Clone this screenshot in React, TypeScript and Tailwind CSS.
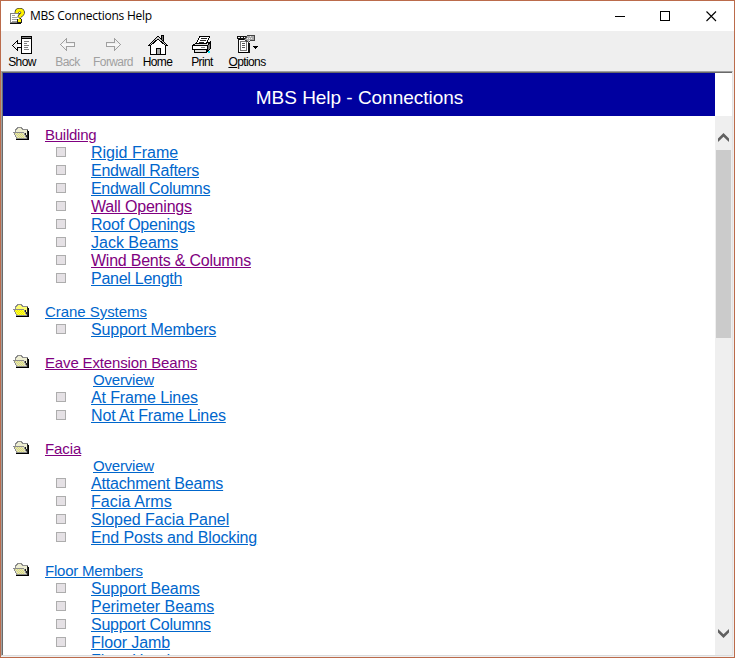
import React from "react";

type Item = { label: string; tracking?: string; visited?: boolean; overview?: boolean };
type Group = { title: string; tracking: string; visited?: boolean; items: Item[] };

const groups: Group[] = [
  {
    title: "Building",
    tracking: "tracking-[-0.25px]",
    visited: true,
    items: [
      { label: "Rigid Frame" },
      { label: "Endwall Rafters", tracking: "tracking-[-0.27px]" },
      { label: "Endwall Columns", tracking: "tracking-[-0.3px]" },
      { label: "Wall Openings", tracking: "tracking-[-0.2px]", visited: true },
      { label: "Roof Openings", tracking: "tracking-[-0.22px]" },
      { label: "Jack Beams" },
      { label: "Wind Bents & Columns", tracking: "tracking-[-0.23px]", visited: true },
      { label: "Panel Length", tracking: "tracking-[-0.27px]" },
    ],
  },
  {
    title: "Crane Systems",
    tracking: "tracking-[-0.05px]",
    items: [{ label: "Support Members", tracking: "tracking-[-0.13px]" }],
  },
  {
    title: "Eave Extension Beams",
    tracking: "tracking-[-0.15px]",
    visited: true,
    items: [
      { label: "Overview", overview: true, tracking: "tracking-[-0.2px]" },
      { label: "At Frame Lines", tracking: "tracking-[-0.12px]" },
      { label: "Not At Frame Lines", tracking: "tracking-[-0.12px]" },
    ],
  },
  {
    title: "Facia",
    tracking: "tracking-[-0.1px]",
    visited: true,
    items: [
      { label: "Overview", overview: true, tracking: "tracking-[-0.2px]" },
      { label: "Attachment Beams", tracking: "tracking-[-0.19px]" },
      { label: "Facia Arms", tracking: "tracking-[0.08px]" },
      { label: "Sloped Facia Panel", tracking: "tracking-[-0.03px]" },
      { label: "End Posts and Blocking", tracking: "tracking-[-0.13px]" },
    ],
  },
  {
    title: "Floor Members",
    tracking: "tracking-[-0.23px]",
    items: [
      { label: "Support Beams", tracking: "tracking-[-0.12px]" },
      { label: "Perimeter Beams", tracking: "tracking-[-0.03px]" },
      { label: "Support Columns", tracking: "tracking-[-0.25px]" },
      { label: "Floor Jamb", tracking: "tracking-[-0.1px]" },
      { label: "Floor Header" },
    ],
  },
];

function HelpIcon() {
  return (
    <svg width="16" height="17" viewBox="0 0 16 17" shapeRendering="crispEdges">
      <path d="M1.5 5.5h9v9h-9z" fill="#fff" stroke="#808080" />
      <path d="M1 15.500h11M11.500 10v6" stroke="#111" fill="none" />
      <path d="M3 7.500h3M3 9.500h5M3 11.500h5M3 13.500h5" stroke="#a0a0a0" />
      <g shapeRendering="auto" fill="none" strokeLinejoin="round">
        <path d="M7.700 5C7.700 2.500 8.800 2 10.900 2c2.900 0 3.600 3 1.700 4.500-1.200.9-2.100 1.300-2.100 3" stroke="#222" strokeWidth="4.200" />
        <path d="M7.700 5C7.700 2.500 8.800 2 10.900 2c2.900 0 3.600 3 1.700 4.500-1.200.9-2.100 1.300-2.100 3" stroke="#fff200" strokeWidth="2.900" />
      </g>
      <path d="M8 11h5v4H8z" fill="#222" />
      <path d="M9 11h3v3H9z" fill="#fff200" />
    </svg>
  );
}

function ShowIcon() {
  return (
    <svg width="20" height="18" viewBox="0 0 20 18" shapeRendering="crispEdges" className="mr-px">
      <path d="M9.500.5h10v17h-10z" fill="#fff" stroke="#000" />
      <path d="M10 1.500h9" stroke="#808080" />
      <path d="M9 2.500h11" stroke="#000" />
      <path d="M12 5.500h5M12 7.500h3M12 9.500h5M12 11.500h4M12 13.500h5" stroke="#808080" />
      <path d="M9 7h-3v5h3z" fill="#fff" />
      <path d="M9 7h-3v1h3zM9 11h-3v1h3zM5 4h1v4H5zM5 11h1v4H5zM4 5h1v1H4zM3 6h1v1H3zM2 7h1v1H2zM1 8h1v1H1zM0 9h1v1H0zM1 10h1v1H1zM2 11h1v1H2zM3 12h1v1H3zM4 13h1v1H4z" fill="#000" />
    </svg>
  );
}

function ArrowIcon({ right }: { right?: boolean }) {
  return (
    <svg width="15" height="13" viewBox="0 0 15 13" shapeRendering="crispEdges" className={right ? "-scale-x-100" : ""}>
      <path d="M2 6h12v2H2z" fill="#f8f8f8" />
      <path d="M6 4h9v1H6zM6 8h9v1H6zM14 4h1v5h-1zM6 0h1v5H6zM6 8h1v5H6zM5 1h1v1H5zM4 2h1v1H4zM3 3h1v1H3zM2 4h1v1H2zM1 5h1v1H1zM0 6h1v1H0zM1 7h1v1H1zM2 8h1v1H2zM3 9h1v1H3zM4 10h1v1H4zM5 11h1v1H5z" fill="#a0a0a0" />
    </svg>
  );
}

function HomeIcon() {
  return (
    <svg width="20" height="20" viewBox="0 0 20 20" shapeRendering="crispEdges">
      <path d="M13.500 5V.5h2V7" fill="#777" stroke="#000" />
      <path d="M2.500 10v9.500h15V10L10 3z" fill="#fff" stroke="#000" />
      <path d="M.5 10.500L9.500 1.500h1l9 9h-2L10 4l-7.500 6.500z" fill="#c8c8c8" stroke="#000" />
      <path d="M8 13h5v7H8z" fill="#000" />
      <path d="M9 14h3v5H9z" fill="#a8a8a8" />
    </svg>
  );
}

function PrintIcon() {
  return (
    <svg width="20" height="19" viewBox="0 0 20 19" shapeRendering="crispEdges">
      <path d="M.5 10.500l5-3h13l-3 3z" fill="#ddd" stroke="#000" />
      <path d="M4.500 8.500l3-7h10l-3 7z" fill="#fff" stroke="#000" />
      <path d="M9 3.500h6M8 5.500h6M7 7.500h5" stroke="#222" />
      <path d="M15.500 10.500l3-4v7l-3 3z" fill="#777" stroke="#000" />
      <path d="M.5 10.500h15v4H.5z" fill="#fff" stroke="#000" />
      <path d="M2.500 14.500h12v3h-12z" fill="#ddd" stroke="#000" />
      <path d="M9 12h4v1H9z" fill="#888" />
      <path d="M16 16h2v2h-2z" fill="#00eaff" />
    </svg>
  );
}

function OptionsIcon() {
  return (
    <svg width="21" height="19" viewBox="0 0 21 19" shapeRendering="crispEdges">
      <path d="M1.500 4.500h10v13h-10z" fill="#fff" stroke="#000" />
      <path d="M0 1h10v1H0zM0 3h12v1H0zM0 1h1v3H0zM3 1h1v3H3zM6 1h1v3H6zM11 8h2v10h-2zM1 4h1v14H1z" fill="#111" />
      <path d="M3.500 6.500h6v9h-6z" fill="#fff" stroke="#777" />
      <path d="M5 8.500h3M5 10.500h3M5 12.500h3" stroke="#555" />
      <path d="M7.500 4.500l3-4h7v5h-4l-2 2z" fill="#aaa" stroke="#444" />
      <path d="M10 3h1v1h-1zM12 3h1v1h-1zM14 3h1v1h-1zM12 5h1v1h-1zM13 1h1v1h-1z" fill="#eee" />
      <path d="M16 11h5v1h-1v1h-1v1h-1v-1h-1v-1h-1z" fill="#000" />
    </svg>
  );
}

function Folder({ bright }: { bright: boolean }) {
  return (
    <svg width="16" height="13" viewBox="0 0 16 13" shapeRendering="crispEdges" className="mt-px ml-[10px] shrink-0 self-start">
      <path d="M15 4h1v9H3v-1h12z" fill="#000" />
      <path d="M2.500 10V2.500h1v-1h1v-1h4v1h1v1h4.500v8z" fill={bright ? "#ffff70" : "#eeeed2"} stroke="#8c8c8c" />
      <path d="M.5 5.500h10l1 1v1l1 1v1l1 1v1H3.500v-1l-1-1v-1l-1-1v-1z" fill={bright ? "#ffff30" : "#e2e2c0"} stroke="#8c8c8c" />
      <path
        d="M2 6h1v1H2zM4 6h1v1H4zM6 6h1v1H6zM8 6h1v1H8zM3 7h1v1H3zM5 7h1v1H5zM7 7h1v1H7zM9 7h1v1H9zM4 8h1v1H4zM6 8h1v1H6zM8 8h1v1H8zM10 8h1v1h-1zM5 9h1v1H5zM7 9h1v1H7zM9 9h1v1H9zM4 10h1v1H4zM6 10h1v1H6zM8 10h1v1H8zM10 10h1v1h-1z"
        fill={bright ? "#f0ec00" : "#dede78"}
      />
      <path d="M12 6h1v2h-1zM13 8h1v2h-1zM14 3h1v9h-1z" fill="#222" />
    </svg>
  );
}

type ToolProps = { label: React.ReactNode; width: string; disabled?: boolean; children: React.ReactNode };

function Tool({ label, width, disabled, children }: ToolProps) {
  return (
    <div className={`flex shrink-0 flex-col items-center ${width}`}>
      <div className="flex h-[23px] items-center justify-center pt-[2px]">{children}</div>
      <div className={`whitespace-nowrap text-[12px] leading-[14px] tracking-[-0.6px] ${disabled ? "text-[#a0a0a0]" : "text-black"}`}>
        {label}
      </div>
    </div>
  );
}

function Chevron({ down }: { down?: boolean }) {
  return (
    <svg width="11" height="9" viewBox="0 0 11 9" className={down ? "rotate-180" : ""}>
      <path d="M0 5.500L5.500 0 11 5.500V9L5.500 3.800 0 9z" fill="#606060" />
    </svg>
  );
}

export default function App() {
  return (
    <div className="flex h-[658px] w-[735px] flex-col overflow-hidden border border-[#bb6b4b] bg-[#efefef] font-['Liberation_Sans',Arial,sans-serif]">
      <header className="flex h-[30px] shrink-0 items-center bg-white pl-2">
        <HelpIcon />
        <span className="ml-[5px] w-[140px] whitespace-nowrap font-['Open_Sans','Noto_Sans',sans-serif] text-[12px] leading-[16px] tracking-[-0.25px] text-black">
          MBS Connections Help
        </span>
        <div className="ml-auto flex items-center pr-[17px]">
          <svg width="102" height="12" viewBox="0 0 102 12" fill="none" stroke="#000">
            <path d="M0 6.500h10M45.500 1.500h9v9h-9z" shapeRendering="crispEdges" />
            <path d="M91.500 1.500l9.500 9.500M101 1.500l-9.500 9.500" strokeWidth="1.100" />
          </svg>
        </div>
      </header>

      <nav className="flex h-[40px] shrink-0 pt-[1px]">
        <Tool label="Show" width="w-[42px]"><ShowIcon /></Tool>
        <Tool label="Back" width="w-[49px]" disabled><ArrowIcon /></Tool>
        <Tool label="Forward" width="w-[42px]" disabled><ArrowIcon right /></Tool>
        <Tool label="Home" width="w-[47px]"><HomeIcon /></Tool>
        <Tool label="Print" width="w-[42px]"><PrintIcon /></Tool>
        <Tool label={<><span className="underline">O</span>ptions</>} width="w-[48px]"><OptionsIcon /></Tool>
      </nav>

      <div className="mr-px mb-px flex min-h-0 grow flex-col border border-t-[#a0a0a0] border-r-[#e3e3e3] border-b-[#dcdcdc] border-l-[#a0a0a0]">
        <div className="flex min-h-0 grow flex-col border-t border-l border-[#696969] bg-white">
          <div className="flex h-[43px] shrink-0">
            <div className="flex w-[712px] items-center justify-center bg-[#0000a0] pt-[7px] pl-px text-[19px] leading-[22px] tracking-[-0.03px] text-white">
              MBS Help - Connections
            </div>
          </div>
          <div className="flex min-h-0 grow">
            <main className="w-[712px] overflow-hidden pt-[10px]">
              {groups.map((group) => (
                <section key={group.title} className="mb-[15px]">
                  <div className="flex h-[18px] items-start">
                    <Folder bright={group.title === "Crane Systems"} />
                    <a className={`ml-4 whitespace-nowrap text-[15px] leading-[17px] underline ${group.tracking} ${group.visited ? "text-[#800080]" : "text-[#0066cc]"}`}>
                      {group.title}
                    </a>
                  </div>
                  {group.items.map((item) => (
                    <div key={item.label} className={`flex ${item.overview ? "-mt-px h-[18px] pl-[90px]" : "h-[18px] pl-[53px]"}`}>
                      {!item.overview && <span className="mt-[3px] mr-[25px] size-[10px] shrink-0 border border-[#adadad] bg-[#e5e1e5]" />}
                      <a className={`whitespace-nowrap underline ${item.overview ? "text-[15px] leading-[17px]" : "text-[16px] leading-[18px]"} ${item.tracking ?? ""} ${item.visited ? "text-[#800080]" : "text-[#0066cc]"}`}>
                        {item.label}
                      </a>
                    </div>
                  ))}
                </section>
              ))}
            </main>
            <div className="flex grow flex-col items-center bg-[#efefef] pt-[17px] pb-[17px]">
              <Chevron />
              <div className="mt-2 h-[188px] w-[15px] bg-[#cbcbcb]" />
              <div className="mt-auto flex"><Chevron down /></div>
            </div>
          </div>
        </div>
      </div>
    </div>
  );
}
